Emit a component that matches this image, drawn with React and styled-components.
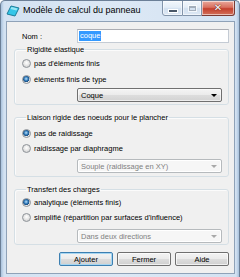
import React from "react";
import styled, { createGlobalStyle } from "styled-components";

const GlobalStyle = createGlobalStyle`
  html, body { margin: 0; padding: 0; background: #ffffff; }
  body { font-family: "Liberation Sans", Arial, sans-serif; color: #000; }
  * { box-sizing: border-box; }
`;

const Window = styled.div`
  width: 240px;
  height: 277px;
  display: flex;
  flex-direction: column;
  border: 1px solid #6b7f97;
  border-bottom: none;
  border-radius: 5px 5px 0 0;
  overflow: hidden;
  background: linear-gradient(
    to right,
    #a9c2dd 0px,
    #d3e2f2 3px,
    #dce8f5 50%,
    #d3e2f2 calc(100% - 3px),
    #a9c2dd 100%
  );
`;

const TitleBar = styled.div`
  height: 20px;
  display: flex;
  align-items: flex-start;
  padding-left: 5px;
`;

const Title = styled.span`
  font-size: 9px;
  line-height: 11px;
  margin-top: 4px;
  margin-left: 3px;
  white-space: nowrap;
`;

const Captions = styled.div`
  margin-left: auto;
  margin-right: 4px;
  display: flex;
  margin-top: -1px;
`;

const CapButton = styled.div`
  width: ${(p) => p.$w}px;
  height: 16px;
  display: flex;
  align-items: center;
  justify-content: center;
  border: 1px solid ${(p) => (p.$close ? "#7a3a33" : "#8294aa")};
  border-left: ${(p) => (p.$first ? undefined : "none")};
  border-radius: ${(p) =>
    p.$first ? "0 0 0 3px" : p.$close ? "0 0 3px 0" : "0"};
  background: ${(p) =>
    p.$close
      ? "linear-gradient(#e9a99c 0%, #d9705f 45%, #c4402d 55%, #d2715b 100%)"
      : "linear-gradient(#f2f7fc 0%, #e4edf7 45%, #d2e0ef 55%, #dde8f4 100%)"};
  box-shadow: inset 0 0 0 1px rgba(255, 255, 255, 0.55);
`;

const MinGlyph = styled.span`
  width: 8px;
  height: 2px;
  margin-top: 6px;
  background: #4a5869;
  border: 1px solid #ffffff;
  box-sizing: content-box;
`;

const MaxGlyph = styled.span`
  width: 7px;
  height: 5px;
  border: 1px solid #a3aebb;
  border-top-width: 2px;
  box-shadow: 0 0 0 1px rgba(255, 255, 255, 0.7);
`;

const CloseGlyph = styled.span`
  font-family: "DejaVu Sans", sans-serif;
  font-weight: bold;
  font-size: 10px;
  line-height: 10px;
  color: #ffffff;
  text-shadow: 0 0 1px #5a1a12, 0 0 1px #5a1a12;
`;

const Client = styled.div`
  flex: 1;
  margin: 0 4px 3px 5px;
  background: #f0f0f0;
  border: 1px solid #8fa2b8;
  padding: 7px 5px 0 7px;
  display: flex;
  flex-direction: column;
`;

const NameRow = styled.div`
  display: flex;
  align-items: center;
  height: 14px;
  padding-left: 8px;
  margin-bottom: 2px;
`;

const Label = styled.span`
  width: 55px;
  font-size: 7.5px;
  line-height: 9px;
`;

const TextBox = styled.div`
  width: 152px;
  height: 14px;
  background: #ffffff;
  border: 1px solid #c4cbd4;
  border-top-color: #abadb3;
  display: flex;
  align-items: center;
  padding-left: 1px;
`;

const Selected = styled.span`
  background: #3399ff;
  color: #ffffff;
  font-size: 7.5px;
  line-height: 10px;
  padding: 0 1px;
`;

const Groups = styled.div`
  display: flex;
  flex-direction: column;
  gap: 8px;
`;

const RadioRow = styled.div`
  display: flex;
  align-items: center;
  height: 11px;
  gap: 3px;
  font-size: 7.5px;
  line-height: 9px;
`;

const RadioDot = styled.span`
  width: 9px;
  height: 9px;
  border-radius: 50%;
  border: 1px solid #8e9399;
  background: ${(p) =>
    p.$on
      ? "radial-gradient(circle at 45% 40%, #b9e1fb 0px, #2f78b8 2px, #1b4f83 3px, #e8e8e8 3.5px, #f4f4f4 100%)"
      : "radial-gradient(circle at 50% 40%, #ffffff 0px, #ececec 2px, #d6d6d6 4px, #f2f2f2 100%)"};
`;

const Combo = styled.div`
  width: 145px;
  height: 14px;
  margin-left: 55px;
  display: flex;
  align-items: center;
  justify-content: space-between;
  padding: 0 4px 0 3px;
  border: 1px solid ${(p) => (p.$disabled ? "#b6babd" : "#707070")};
  border-radius: 2px;
  font-size: 7.5px;
  line-height: 9px;
  color: ${(p) => (p.$disabled ? "#7f7f7f" : "#000")};
  background: ${(p) =>
    p.$disabled
      ? "#f6f6f6"
      : "linear-gradient(#f4f4f4 0%, #ebebeb 50%, #dddddd 51%, #d2d2d2 100%)"};
  box-shadow: inset 0 0 0 1px ${(p) => (p.$disabled ? "#ffffff" : "rgba(255,255,255,0.6)")};
`;

const Group = styled.fieldset`
  margin: 0;
  min-width: 0;
  padding: ${(p) => p.$pt}px 6px ${(p) => p.$pb}px 7px;
  border: 1px solid #d5dfe5;
  border-radius: 3px;
  box-shadow: inset 1px 1px 0 #fbfbfb;
  display: flex;
  flex-direction: column;

  & > ${RadioRow} + ${RadioRow} {
    margin-top: ${(p) => p.$rg}px;
  }
  & > ${Combo} {
    margin-top: ${(p) => p.$cg}px;
  }
`;

const Legend = styled.legend`
  margin-left: 4px;
  padding: 0 1px;
  font-size: 7.5px;
  line-height: 9px;
`;

const Arrow = styled.span`
  width: 0;
  height: 0;
  border-left: 3px solid transparent;
  border-right: 3px solid transparent;
  border-top: 3px solid ${(p) => (p.$disabled ? "#a8a8a8" : "#000")};
`;

const ButtonRow = styled.div`
  display: flex;
  justify-content: flex-end;
  gap: 4px;
  margin-top: 7px;
`;

const Button = styled.div`
  width: 54px;
  height: 14px;
  display: flex;
  align-items: center;
  justify-content: center;
  font-size: 7.5px;
  line-height: 9px;
  border: 1px solid ${(p) => (p.$default ? "#3c7fb1" : "#707070")};
  border-radius: 2px;
  background: linear-gradient(#f3f3f3 0%, #ebebeb 50%, #dddddd 51%, #cfcfcf 100%);
  box-shadow: inset 0 0 0 1px
    ${(p) => (p.$default ? "#a6d6f2" : "rgba(255,255,255,0.7)")};
`;

const AppIcon = () => (
  <svg width="14" height="12" viewBox="0 0 14 12" style={{ marginTop: 4 }}>
    <polygon points="5,1 13,3 9,11 1,9" fill="#35c6e8" stroke="#1b7c99" strokeWidth="1" />
    <polygon points="5.5,2 11.5,3.5 10.5,5.5 4.5,4" fill="#9ae6f5" />
  </svg>
);

const Radio = ({ on, children }) => (
  <RadioRow>
    <RadioDot $on={on} />
    <span>{children}</span>
  </RadioRow>
);

export default function App() {
  return (
    <>
      <GlobalStyle />
      <Window>
        <TitleBar>
          <AppIcon />
          <Title>Modèle de calcul du panneau</Title>
          <Captions>
            <CapButton $w={21} $first>
              <MinGlyph />
            </CapButton>
            <CapButton $w={19}>
              <MaxGlyph />
            </CapButton>
            <CapButton $w={33} $close>
              <CloseGlyph>✕</CloseGlyph>
            </CapButton>
          </Captions>
        </TitleBar>
        <Client>
          <NameRow>
            <Label>Nom :</Label>
            <TextBox>
              <Selected>coque</Selected>
            </TextBox>
          </NameRow>
          <Groups>
            <Group $pt={4} $pb={2} $rg={5} $cg={3}>
              <Legend>Rigidité élastique</Legend>
              <Radio>pas d'éléments finis</Radio>
              <Radio on>éléments finis de type</Radio>
              <Combo>
                <span>Coque</span>
                <Arrow />
              </Combo>
            </Group>
            <Group $pt={6} $pb={3} $rg={4} $cg={5}>
              <Legend>Liaison rigide des noeuds pour le plancher</Legend>
              <Radio on>pas de raidissage</Radio>
              <Radio>raidissage par diaphragme</Radio>
              <Combo $disabled>
                <span>Souple (raidissage en XY)</span>
                <Arrow $disabled />
              </Combo>
            </Group>
            <Group $pt={3} $pb={1} $rg={4} $cg={6}>
              <Legend>Transfert des charges</Legend>
              <Radio on>analytique (éléments finis)</Radio>
              <Radio>simplifié (répartition par surfaces d'influence)</Radio>
              <Combo $disabled>
                <span>Dans deux directions</span>
                <Arrow $disabled />
              </Combo>
            </Group>
          </Groups>
          <ButtonRow>
            <Button $default>Ajouter</Button>
            <Button>Fermer</Button>
            <Button>Aide</Button>
          </ButtonRow>
        </Client>
      </Window>
    </>
  );
}
